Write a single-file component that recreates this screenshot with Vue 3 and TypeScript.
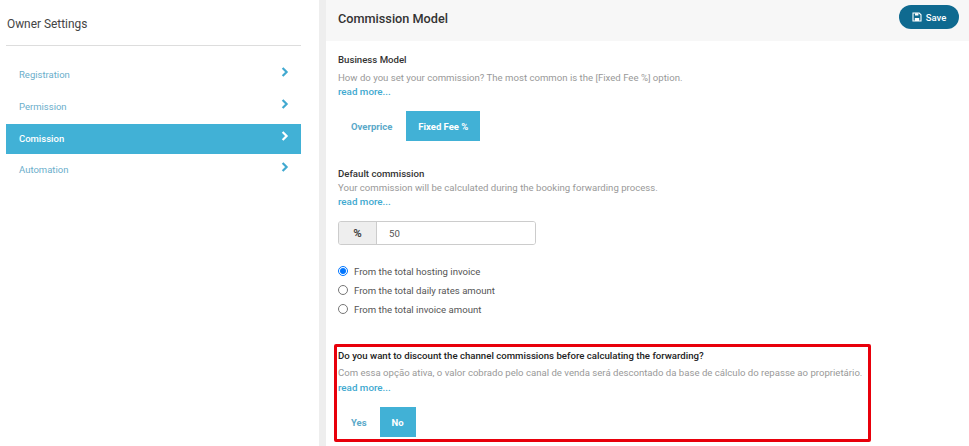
<script setup lang="ts">
import { ref } from 'vue';

const menu = ['Registration', 'Permission', 'Comission', 'Automation'];
const activeMenu = ref('Comission');

const model = ref('Fixed Fee %');
const discount = ref('No');
const base = ref('hosting');

const baseOptions = [
  { value: 'hosting', label: 'From the total hosting invoice' },
  { value: 'daily', label: 'From the total daily rates amount' },
  { value: 'invoice', label: 'From the total invoice amount' },
];
</script>

<template>
  <div class="page">
    <aside class="sidebar">
      <h2 class="side-title">Owner Settings</h2>
      <nav class="menu">
        <a
          v-for="item in menu"
          :key="item"
          class="menu-item"
          :class="{ active: item === activeMenu }"
          @click="activeMenu = item"
        >
          <span>{{ item }}</span>
          <svg class="chevron" width="8" height="10" viewBox="0 0 8 10">
            <path d="M1.6 1 5.6 5 1.6 9" fill="none" stroke="currentColor" stroke-width="2.2" />
          </svg>
        </a>
      </nav>
    </aside>

    <main class="main">
      <header class="head">
        <h1>Commission Model</h1>
        <button class="save">
          <svg width="10" height="10" viewBox="0 0 10 10">
            <path d="M1 1h6.2L9 2.8V9H1z" fill="none" stroke="currentColor" stroke-width="1.1" />
            <path d="M3 1.2h3.4v2.4H3zM2.8 6h4.4v3H2.8z" fill="currentColor" />
          </svg>
          Save
        </button>
      </header>

      <div class="body">
        <section class="block">
          <h3>Business Model</h3>
          <p class="hint">How do you set your commission? The most common is the [Fixed Fee %] option.</p>
          <a class="more">read more...</a>
          <div class="toggle fee">
            <button
              v-for="opt in ['Overprice', 'Fixed Fee %']"
              :key="opt"
              :class="{ on: model === opt }"
              @click="model = opt"
            >{{ opt }}</button>
          </div>
        </section>

        <section class="block second">
          <h3>Default commission</h3>
          <p class="hint">Your commission will be calculated during the booking forwarding process.</p>
          <a class="more">read more...</a>
          <div class="input-group">
            <span class="addon">%</span>
            <input class="field" value="50" />
          </div>
          <div class="radios">
            <label v-for="opt in baseOptions" :key="opt.value" class="radio">
              <input v-model="base" type="radio" name="base" :value="opt.value" />
              <span>{{ opt.label }}</span>
            </label>
          </div>
        </section>

        <section class="block marked">
          <h3 class="dark">Do you want to discount the channel commissions before calculating the forwarding?</h3>
          <p class="hint">Com essa opção ativa, o valor cobrado pelo canal de venda será descontado da base de cálculo do repasse ao proprietário.</p>
          <a class="more">read more...</a>
          <div class="toggle yes-no">
            <button
              v-for="opt in ['Yes', 'No']"
              :key="opt"
              :class="{ on: discount === opt }"
              @click="discount = opt"
            >{{ opt }}</button>
          </div>
        </section>
      </div>
    </main>
  </div>
</template>

<style>
html,
body {
  margin: 0;
  background: #fff;
}
</style>

<style scoped>
.page {
  display: flex;
  width: 969px;
  height: 446px;
  overflow: hidden;
  font-family: Roboto, "Liberation Sans", sans-serif;
  color: #333;
}

.sidebar {
  box-sizing: border-box;
  width: 319px;
  flex: none;
  padding: 0 18px 0 6px;
}

.side-title {
  box-sizing: border-box;
  margin: 0;
  height: 46px;
  padding-left: 1px;
  line-height: 48px;
  font-size: 11.9px;
  font-weight: 400;
  color: #444;
  border-bottom: 1px solid #ddd;
}

.menu {
  display: flex;
  flex-direction: column;
  margin-top: 13px;
}

.menu-item {
  display: flex;
  align-items: center;
  justify-content: space-between;
  height: 32px;
  padding: 0 12px 0 13px;
  font-size: 9.5px;
  color: #6aaecb;
  cursor: pointer;
}

.menu-item span {
  margin-top: -1px;
}

.menu-item .chevron {
  color: #41a9d0;
  margin-top: -6px;
}

.menu-item.active {
  height: 30px;
  margin-top: 1px;
  background: #41b1d6;
  color: #fff;
  font-weight: 500;
}

.menu-item.active .chevron {
  color: #fff;
}

.main {
  flex: 1;
  border-left: 7px solid #eeeeee;
  min-width: 0;
}

.head {
  box-sizing: border-box;
  display: flex;
  align-items: center;
  justify-content: space-between;
  height: 41px;
  padding: 0 10px 7px 12px;
  background: #f7f7f7;
}

.head h1 {
  margin: 2px 0 0;
  font-size: 12.7px;
  font-weight: 500;
  color: #333;
}

.save {
  display: flex;
  align-items: center;
  gap: 4px;
  height: 24px;
  width: 60px;
  justify-content: center;
  border: 0;
  border-radius: 12px;
  background: #0f6a90;
  color: #fff;
  font: 500 9.5px Roboto, "Liberation Sans", sans-serif;
}

.body {
  padding: 12px 0 0 12px;
}

.block h3 {
  margin: 0;
  font-size: 9.65px;
  line-height: 14px;
  font-weight: 500;
  color: #333;
}

.hint {
  margin: 4px 0 0;
  font-size: 9.6px;
  line-height: 14px;
  color: #999;
}

.more {
  display: block;
  font-size: 9.8px;
  line-height: 14px;
  font-weight: 500;
  color: #41a9d0;
  cursor: pointer;
}

.toggle {
  display: flex;
  margin-top: 12px;
}

.toggle button {
  height: 30px;
  padding: 0 13px;
  border: 0;
  background: transparent;
  color: #5ba9c9;
  font: 700 9.5px Roboto, "Liberation Sans", sans-serif;
}

.toggle button.on {
  padding: 0;
  background: #41b1d6;
  color: #fff;
}

.fee button.on {
  width: 74px;
  margin-left: 1px;
}

.yes-no button.on {
  width: 36px;
}

.second {
  margin-top: 26px;
}

.second .hint {
  margin-top: 0;
}

.input-group {
  box-sizing: border-box;
  display: flex;
  width: 198px;
  height: 24px;
  margin-top: 12px;
  border: 1px solid #ccc;
  border-radius: 3px;
  overflow: hidden;
}

.addon {
  display: flex;
  align-items: center;
  justify-content: center;
  width: 37px;
  flex: none;
  background: #eee;
  border-right: 1px solid #ccc;
  font-size: 11.5px;
  font-weight: 700;
  color: #444;
}

.field {
  flex: 1;
  min-width: 0;
  padding: 0 12px;
  border: 0;
  outline: 0;
  font: 400 9.6px Roboto, "Liberation Sans", sans-serif;
  color: #555;
}

.radios {
  display: flex;
  flex-direction: column;
  gap: 5px;
  margin-top: 19px;
}

.radio {
  display: flex;
  align-items: center;
  gap: 6px;
  height: 14px;
  font-size: 9.6px;
  color: #555;
}

.radio input {
  width: 10px;
  height: 10px;
  margin: 0;
  accent-color: #0075ff;
}

.marked {
  box-sizing: border-box;
  width: 537px;
  height: 98px;
  margin: 28px 0 0 -4px;
  padding: 2px 4px 0 1px;
  border: 3px solid #e8000b;
  border-radius: 2px;
}

.marked .dark {
  color: #222;
}

.marked .hint {
  margin-top: 3px;
}

.marked .more {
  margin-top: 1px;
}
</style>
